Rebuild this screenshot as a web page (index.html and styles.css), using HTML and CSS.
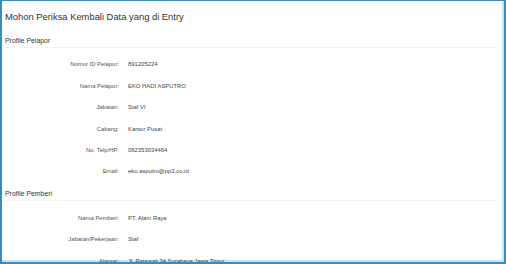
FILE: index.html
```html
<!DOCTYPE html>
<html>
<head>
<meta charset="utf-8">
<link rel="stylesheet" href="styles.css">
</head>
<body>
<div class="frame">
  <div class="title">Mohon Periksa Kembali Data yang di Entry</div>
  <div class="section first">Profile Pelapor</div>
  <div class="rows">
    <div class="label">Nomor ID Pelapor:</div><div class="value">891205224</div>
    <div class="label">Nama Pelapor:</div><div class="value">EKO HADI ASPUTRO</div>
    <div class="label">Jabatan:</div><div class="value">Staf VI</div>
    <div class="label">Cabang:</div><div class="value">Kantor Pusat</div>
    <div class="label">No. Telp/HP:</div><div class="value">082353034464</div>
    <div class="label">Email:</div><div class="value">eko.asputro@pp3.co.id</div>
  </div>
  <div class="section">Profile Pemberi</div>
  <div class="rows">
    <div class="label">Nama Pemberi:</div><div class="value">PT. Alam Raya</div>
    <div class="label">Jabatan/Pekerjaan:</div><div class="value">Staf</div>
    <div class="label">Alamat:</div><div class="value">Jl. Rajawali 34 Surabaya Jawa Timur</div>
  </div>
</div>
</body>
</html>
```
FILE: styles.css
```css
html, body {
  margin: 0;
  padding: 0;
  background: #ffffff;
}
.frame {
  box-sizing: border-box;
  width: 506px;
  height: 264px;
  overflow: hidden;
  border-style: solid;
  border-color: #3a8dba;
  border-width: 1px 2px 2px 2px;
  box-shadow: inset -2px -2px 0 #c4e8ec;
  font-family: "Liberation Sans", Arial, sans-serif;
  color: #333333;
  background: #ffffff;
}
.title {
  margin-top: 9px;
  margin-right: 8px;
  padding-left: 3px;
  border-top: 1px solid #fdf8f9;
  font-size: 9.4px;
  line-height: 11px;
  color: #333333;
}
.section {
  margin-top: 8px;
  margin-right: 8px;
  padding-left: 3px;
  padding-bottom: 2px;
  border-bottom: 1px solid #f3f3f3;
  font-size: 6.9px;
  line-height: 8px;
  color: #333333;
}
.section.first {
  margin-top: 14.7px;
}
.rows {
  display: grid;
  grid-template-columns: 117px 1fr;
  column-gap: 9px;
  grid-auto-rows: 21.4px;
  padding-top: 6px;
  font-size: 5.9px;
  align-items: center;
}
.label {
  text-align: right;
  color: #555555;
}
.value {
  color: #444444;
}
```
